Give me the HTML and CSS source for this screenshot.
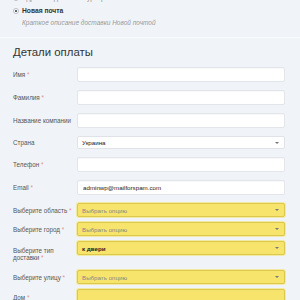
FILE: index.html
```html
<!DOCTYPE html>
<html lang="ru">
<head>
<meta charset="UTF-8">
<title>Оформление заказа</title>
<link rel="stylesheet" href="styles.css">
</head>
<body>
<div class="shipping">
  <div class="method method-cut">
    <span class="radio"></span>
    <span>Адресная доставка курьером</span>
  </div>
  <div class="method">
    <span class="radio checked"></span>
    <span class="method-name">Новая почта</span>
  </div>
  <p class="method-desc">Краткое описание доставки Новой почтой</p>
</div>

<div class="billing">
  <h3>Детали оплаты</h3>

  <div class="field">
    <label>Имя <abbr>*</abbr></label>
    <input class="input" type="text" value="">
  </div>
  <div class="field">
    <label>Фамилия <abbr>*</abbr></label>
    <input class="input" type="text" value="">
  </div>
  <div class="field">
    <label>Название компании</label>
    <input class="input" type="text" value="">
  </div>
  <div class="field">
    <label>Страна</label>
    <div class="select">
      <span class="select-value">Украина</span>
      <span class="arrow"></span>
    </div>
  </div>
  <div class="field">
    <label>Телефон <abbr>*</abbr></label>
    <input class="input" type="text" value="">
  </div>
  <div class="field">
    <label>Email <abbr>*</abbr></label>
    <input class="input" type="text" value="adminwp@mailforspam.com">
  </div>
  <div class="field field-hl">
    <label>Выберите область <abbr>*</abbr></label>
    <div class="select select-hl">
      <span class="select-placeholder">Выбрать опцию</span>
      <span class="arrow"></span>
    </div>
  </div>
  <div class="field field-hl">
    <label>Выберите город <abbr>*</abbr></label>
    <div class="select select-hl">
      <span class="select-placeholder">Выбрать опцию</span>
      <span class="arrow"></span>
    </div>
  </div>
  <div class="field field-hl field-tall">
    <label>Выберите тип<br>доставки <abbr>*</abbr></label>
    <div class="select select-hl">
      <span class="select-value bold">к двери</span>
      <span class="arrow"></span>
    </div>
  </div>
  <div class="field field-hl">
    <label>Выберите улицу <abbr>*</abbr></label>
    <div class="select select-hl">
      <span class="select-placeholder">Выбрать опцию</span>
      <span class="arrow"></span>
    </div>
  </div>
  <div class="field field-hl">
    <label>Дом <abbr>*</abbr></label>
    <input class="input input-hl" type="text" value="">
  </div>
</div>
</body>
</html>
```

FILE: styles.css
```css
body{
  margin: 0;
  background: #f0f4f8;
  color: #333;
  font-family: "Liberation Sans", Arial, sans-serif;
  overflow: hidden;
}

/* shipping methods */
.shipping{
  padding: 0 12px 10px 13px;
}
.method{
  display: flex;
  align-items: center;
  height: 9px;
  margin-bottom: 3px;
  font-size: 6.7px;
  color: #333;
}
.method-cut{
  margin-top: -7px;
  margin-bottom: 4px;
  color: #888;
}
.radio{
  width: 4px;
  height: 4px;
  border: 1px solid #b8bcc2;
  border-radius: 50%;
  background: #fff;
  margin-right: 3px;
  flex: none;
}
.radio.checked{
  background: radial-gradient(circle, #666 0 1px, #fff 1.3px);
}
.method-name{
  font-weight: bold;
}
.method-desc{
  margin: 0;
  padding-left: 9px;
  font-size: 6.5px;
  line-height: 9px;
  font-style: italic;
  color: #999;
}

/* billing */
.billing{
  border-top: 1px solid #fafcfd;
  padding: 7px 15px 0 13px;
}
.billing h3{
  margin: 0 0 8px;
  font-size: 11.4px;
  line-height: 14px;
  font-weight: normal;
  color: #333;
}
.field{
  display: flex;
  align-items: center;
  margin-bottom: 8px;
}
.field label{
  width: 64px;
  flex: none;
  font-size: 6.3px;
  line-height: 7px;
  color: #555;
  white-space: nowrap;
}
.field abbr{
  color: #ea8a92;
  text-decoration: none;
}
.field-hl{
  margin-bottom: 5px;
}
.field-tall{
  align-items: flex-start;
  margin-bottom: 9px;
}
.field-tall label{
  padding-top: 6px;
}

.input{
  flex: 1;
  min-width: 0;
  height: 15px;
  box-sizing: border-box;
  margin: 0;
  padding: 0 5px;
  border: 1px solid #e2e5e9;
  border-radius: 2px;
  background: #fff;
  box-shadow: inset 0 1px 1px rgba(0,0,0,0.03);
  font-family: inherit;
  font-size: 6.2px;
  color: #222;
  outline: none;
}
.select{
  flex: 1;
  height: 13px;
  box-sizing: border-box;
  display: flex;
  align-items: center;
  justify-content: space-between;
  padding: 0 4px;
  border: 1px solid #dfe2e6;
  border-radius: 2px;
  background: #fff;
  font-size: 6.2px;
}
.select-value{
  color: #222;
}
.select-placeholder{
  color: #888;
}
.bold{
  font-weight: bold;
}
.arrow{
  width: 0;
  height: 0;
  border-left: 2px solid transparent;
  border-right: 2px solid transparent;
  border-top: 2px solid #777;
  margin-right: 1px;
}
.select-hl,
.input-hl{
  height: 14px;
  background: #f7e46c;
  border: 1px solid #dcc84c;
  box-shadow: 0 0 0 1px #f2e9a4;
}
.input-hl{
  height: 16px;
}
```
